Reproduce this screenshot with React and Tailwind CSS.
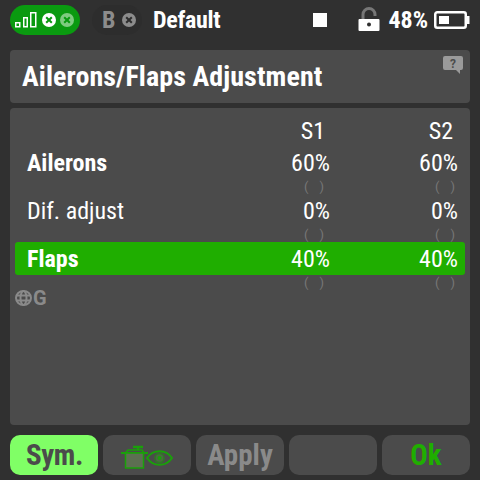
import React from 'react';

const rows = [
  { name: 'Ailerons', s1: '60%', s2: '60%', bold: true },
  { name: 'Dif. adjust', s1: '0%', s2: '0%' },
  { name: 'Flaps', s1: '40%', s2: '40%', bold: true, active: true },
];

function CircleX({ className }) {
  return (
    <svg viewBox="0 0 14 14" className={className}>
      <circle cx="7" cy="7" r="7" fill="currentColor" />
      <path d="M4.2 4.2 9.8 9.8M9.8 4.2 4.2 9.8" stroke="var(--x)" strokeWidth="2" />
    </svg>
  );
}

function Signal() {
  return (
    <svg width="22" height="16" viewBox="0 0 22 16" fill="none" stroke="white" strokeWidth="1.5">
      <rect x="0.75" y="10.75" width="4" height="4" />
      <rect x="8.75" y="5.75" width="3.5" height="9" />
      <rect x="15.75" y="0.75" width="5" height="14" />
    </svg>
  );
}

function Parens() {
  return <div className="flex h-[24px] w-[20px] items-center justify-between text-[13px] leading-none text-[#777777]"><span>(</span><span>)</span></div>;
}

function Header() {
  return (
    <div className="flex h-[50px] items-start pl-[10px] pr-[10px] pt-[5px]">
      <div className="flex h-[30px] w-[70px] items-center rounded-full bg-[#0a9a10] pl-[5px]">
        <Signal />
        <CircleX className="ml-[5px] h-[14px] w-[14px] text-white [--x:#0a9a10]" />
        <CircleX className="ml-[4px] h-[14px] w-[14px] text-[#7fcb80] [--x:#0a9a10]" />
      </div>
      <div className="ml-[12px] flex h-[30px] w-[50px] items-center rounded-full bg-[#2d2d2d] pl-[10px]">
        <span className="text-[24px] font-bold leading-none text-[#8c8c8c] [font-stretch:75%]">B</span>
        <CircleX className="ml-[7px] h-[14px] w-[14px] text-[#8c8c8c] [--x:#2d2d2d]" />
      </div>
      <div className="ml-[11px] flex h-[30px] items-center text-[24px] font-bold leading-none tracking-[-0.3px] text-white [font-stretch:75%]">Default</div>
      <div className="ml-auto flex h-[30px] items-center">
        <div className="h-[14px] w-[14px] bg-white" />
        <svg width="22" height="26" viewBox="0 0 22 26" className="ml-[31px]">
          <path d="M5 12V7.5a6 6 0 0 1 12 0V9" fill="none" stroke="#777777" strokeWidth="3" />
          <path fillRule="evenodd" fill="white" d="M1.5 12h19a1 1 0 0 1 1 1v10a1 1 0 0 1-1 1h-19a1 1 0 0 1-1-1V13a1 1 0 0 1 1-1Zm9.5 3.5a2 2 0 1 0 0 4 2 2 0 0 0 0-4Z" />
        </svg>
        <span className="ml-[8px] text-[24px] font-bold leading-none text-white [font-stretch:75%]">48%</span>
        <svg width="36" height="20" viewBox="0 0 36 20" className="ml-[6px]">
          <rect x="1.25" y="2.25" width="30.5" height="15.5" rx="2" fill="none" stroke="white" strokeWidth="2.5" />
          <rect x="5" y="6" width="10" height="8" fill="white" />
          <rect x="33" y="6" width="2.5" height="8" fill="white" />
        </svg>
      </div>
    </div>
  );
}

function PotIcon() {
  return (
    <svg width="52" height="24" viewBox="0 0 52 24" className="mt-[4px]">
      <g stroke="#1aa00a" fill="none" strokeWidth="1.5">
        <path d="M12 2h10" strokeWidth="2.5" />
        <path d="M17 2v3" strokeWidth="2" />
        <path d="M4.5 8 7 5h14l2 3" />
        <path d="M0 8h27" strokeWidth="2" />
        <rect x="4.5" y="8" width="18" height="15" fill="#5d6f52" />
        <path d="M26 13c6-9 19-9 25 0c-6 9-19 9-25 0Z" strokeWidth="2" />
        <circle cx="38.5" cy="13" r="4.5" stroke="#2f7a24" fill="#4a6a40" />
      </g>
      <circle cx="38.5" cy="13" r="2" fill="#1aa00a" />
    </svg>
  );
}

export default function App() {
  return (
    <div className="flex h-[480px] w-[480px] flex-col overflow-hidden bg-[#303030] font-['Roboto',sans-serif]">
      <Header />
      <div className="relative mx-[10px] flex h-[53px] shrink-0 items-center rounded-[4px] bg-[#4b4b4b] pl-[12px]">
        <span className="text-[28px] font-bold leading-none tracking-[0.08px] text-white [font-stretch:75%]">Ailerons/Flaps Adjustment</span>
        <svg width="20" height="18" viewBox="0 0 20 18" className="absolute right-[7px] top-[6px]">
          <path d="M2 0h16a2 2 0 0 1 2 2v10a2 2 0 0 1-2 2h-1v4l-4-4H2a2 2 0 0 1-2-2V2a2 2 0 0 1 2-2Z" fill="#9a9a9a" />
          <text x="10" y="11.5" textAnchor="middle" fontSize="12" fontWeight="700" fill="#4b4b4b">?</text>
        </svg>
      </div>
      <div className="mx-[10px] mt-[5px] flex h-[317px] shrink-0 flex-col rounded-[4px] bg-[#4b4b4b] px-[5px] pt-[9px]">
        <div className="flex h-[29px] items-center justify-end pb-[2px] text-[24px] leading-none text-white [font-stretch:75%]">
          <span className="w-[128px] pr-[12px] text-right">S1</span>
          <span className="w-[128px] pr-[12px] text-right">S2</span>
        </div>
        {rows.map((row) => (
          <div key={row.name} className="flex flex-col">
            <div className={`flex h-[33px] items-center rounded-[3px] pl-[12px] pt-[1px] text-[24px] leading-none text-white [font-stretch:75%] ${row.active ? 'bg-[#1fae00]' : ''}`}>
              <span className={row.bold ? 'font-bold' : ''}>{row.name}</span>
              <div className="ml-auto flex">
                <span className="w-[128px] pr-[7px] text-right">{row.s1}</span>
                <span className="w-[128px] pr-[7px] text-right">{row.s2}</span>
              </div>
            </div>
            <div className="flex h-[15px] items-center justify-end pr-[10px]">
              <Parens />
              <div className="ml-[111px]"><Parens /></div>
            </div>
          </div>
        ))}
        <div className="mt-[-2px] flex items-center text-[#8a8a8a]">
          <svg width="18" height="16" viewBox="0 0 18 16" fill="none" stroke="currentColor" strokeWidth="2">
            <ellipse cx="8.5" cy="8" rx="7.5" ry="7" />
            <ellipse cx="8.5" cy="8" rx="3" ry="7" />
            <path d="M1 5.5h15M1 10.5h15" />
          </svg>
          <span className="text-[20px] font-bold leading-none">G</span>
        </div>
      </div>
      <div className="mx-[10px] mt-[10px] grid h-[40px] grid-cols-5 gap-[5px] text-[29px] font-bold leading-none [font-stretch:75%]">
        <div className="flex items-center justify-center rounded-[10px] bg-[#80ff66] pl-[1px] tracking-[-0.4px] text-[#4b4b4b]">Sym.</div>
        <div className="flex items-center justify-center rounded-[10px] bg-[#4b4b4b]"><PotIcon /></div>
        <div className="flex items-center justify-center rounded-[10px] bg-[#4b4b4b] text-[#8a8a8a]">Apply</div>
        <div className="rounded-[10px] bg-[#4b4b4b]" />
        <div className="flex items-center justify-center rounded-[10px] bg-[#4b4b4b] text-[#1fae00]">Ok</div>
      </div>
    </div>
  );
}
